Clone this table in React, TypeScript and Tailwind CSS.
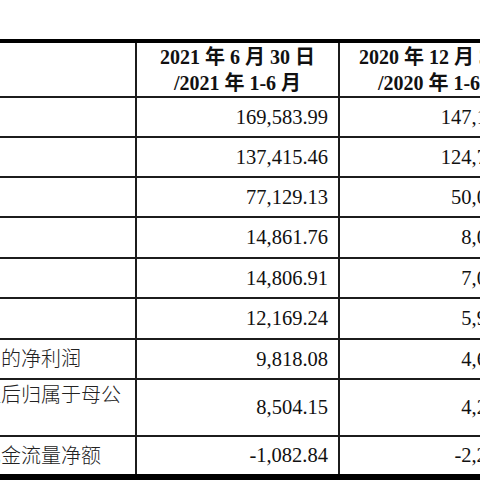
import * as React from "react";

type Row = {
  label: string;
  a: string;
  b: string;
  h: string;
};

const rows: Row[] = [
  { label: "资产总额", a: "169,583.99", b: "147,128.83", h: "h-[40px]" },
  { label: "所有者权益", a: "137,415.46", b: "124,736.57", h: "h-[40px]" },
  { label: "营业收入", a: "77,129.13", b: "50,061.25", h: "h-[40px]" },
  { label: "营业利润", a: "14,861.76", b: "8,031.50", h: "h-[41px]" },
  { label: "利润总额", a: "14,806.91", b: "7,078.39", h: "h-[40px]" },
  { label: "净利润", a: "12,169.24", b: "5,912.67", h: "h-[41px]" },
  { label: "归属于母公司股东的净利润", a: "9,818.08", b: "4,665.41", h: "h-[40px]" },
  {
    label: "扣除非经常性损益后归属于母公司股东的净利润",
    a: "8,504.15",
    b: "4,236.72",
    h: "h-[57px]",
  },
];

const serif = "font-['Liberation_Serif','Noto_Sans_CJK_SC',serif]";

function DataRow({ row, last }: { row: Row; last?: boolean }) {
  return (
    <div
      className={`grid grid-cols-[302px_203px_203px] ${row.h} ${
        last ? "border-b-[6px] border-black" : "border-b-2 border-[#1c1c1c]"
      }`}
    >
      <div className="flex items-center border-r-2 border-[#1c1c1c] pl-[6px] pr-[10px] text-[20px] leading-[26px] font-light text-[#222]">
        {row.label}
      </div>
      <div className="flex items-center justify-end border-r-2 border-[#1c1c1c] pr-[10px] text-[20.5px] text-[#111]">
        {row.a}
      </div>
      <div className="flex items-center justify-end pr-[10px] text-[20.5px] text-[#111]">
        {row.b}
      </div>
    </div>
  );
}

export default function App() {
  return (
    <div className={`h-[480px] w-[480px] overflow-hidden bg-white pt-[39px] ${serif}`}>
      <div className="ml-[-165px] w-[710px] border-t-4 border-black">
        <div className="grid h-[55px] grid-cols-[302px_203px_203px] border-b-2 border-[#1c1c1c]">
          <div className="flex items-center border-r-2 border-[#1c1c1c] pl-[6px] text-[20px] font-bold">
            项目
          </div>
          <div className="flex flex-col items-center justify-center border-r-2 border-[#1c1c1c] text-[20px] leading-[26px] font-bold text-[#111]">
            <span>2021 年 6 月 30 日</span>
            <span>/2021 年 1-6 月</span>
          </div>
          <div className="flex flex-col items-center justify-center text-[20px] leading-[26px] font-bold text-[#111]">
            <span>2020 年 12 月 31 日</span>
            <span>/2020 年 1-6 月</span>
          </div>
        </div>
        {rows.map((r) => (
          <DataRow key={r.label} row={r} />
        ))}
        <DataRow
          last
          row={{
            label: "经营活动产生的现金流量净额",
            a: "-1,082.84",
            b: "-2,259.31",
            h: "h-[43px]",
          }}
        />
      </div>
    </div>
  );
}
